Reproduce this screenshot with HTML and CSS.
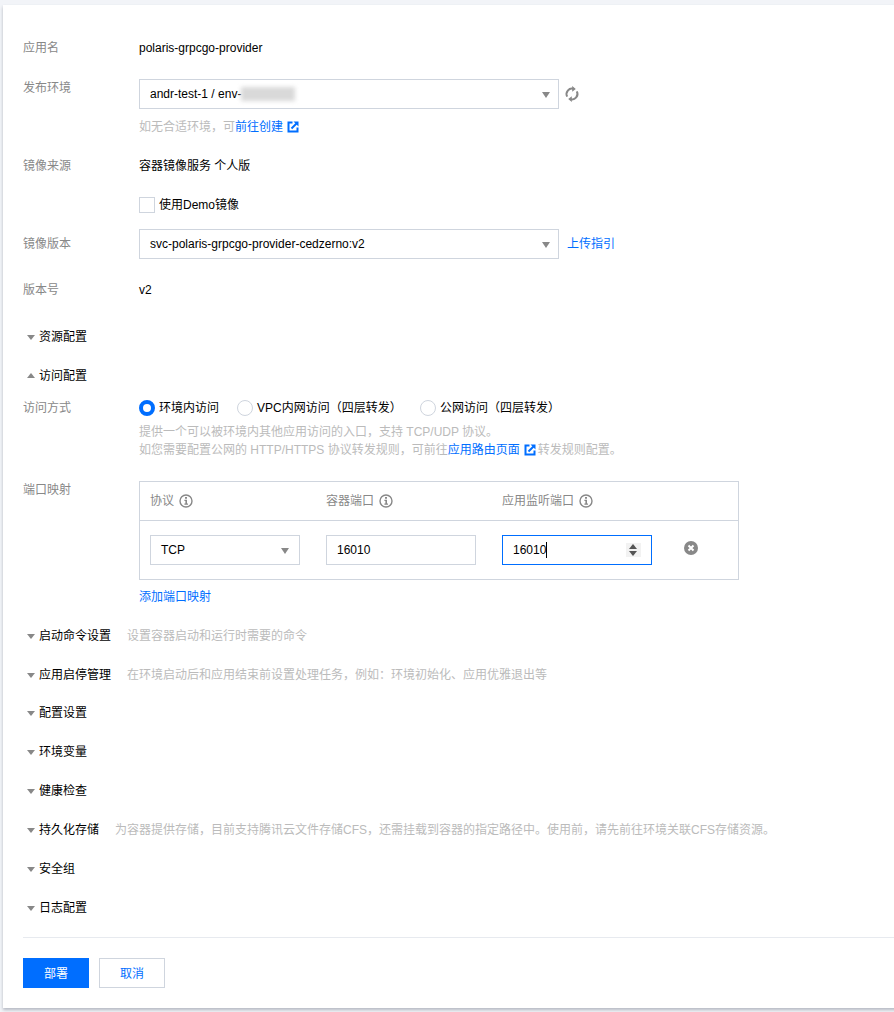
FILE: index.html
```html
<!DOCTYPE html>
<html lang="zh-CN">
<head>
<meta charset="utf-8">
<title>部署</title>
<link rel="stylesheet" href="styles.css">
</head>
<body>
<main class="card">
  <div class="row">
    <div class="label">应用名</div>
    <div class="value">polaris-grpcgo-provider</div>
  </div>

  <div class="row row-env">
    <div class="label">发布环境</div>
    <div class="field">
      <div class="inline">
        <div class="select select-wide"><span>andr-test-1 / env-</span><span class="blurred"></span><i class="caret-select"></i></div>
        <svg class="refresh" viewBox="0 0 16 16" width="16" height="16"><path d="M3.200 10.600A5.400 5.400 0 0 1 9.600 2.900" fill="none" stroke="#888" stroke-width="2"/><path d="M12.800 5.400A5.400 5.400 0 0 1 6.400 13.100" fill="none" stroke="#888" stroke-width="2"/><path d="M8.200 0l3.600 3-3.600 2.800zM7.800 16l-3.600-3 3.600-2.800z" fill="#888"/></svg>
      </div>
      <div class="help help-env">如无合适环境，可<a class="link">前往创建</a><svg class="ext" viewBox="0 0 12 12" width="12" height="12"><path d="M5.500 1.500h-4v9h9v-4" fill="none" stroke="#006eff" stroke-width="2"/><path d="M4.500 7.500l5-5" stroke="#006eff" stroke-width="2"/><path d="M6.500 .5h5v5z" fill="#006eff"/></svg>
      </div>
    </div>
  </div>

  <div class="row row-source">
    <div class="label">镜像来源</div>
    <div class="value">容器镜像服务 个人版</div>
  </div>

  <div class="row row-demo">
    <div class="label"></div>
    <label class="check"><span class="box"></span>使用Demo镜像</label>
  </div>

  <div class="row row-version">
    <div class="label label-mid">镜像版本</div>
    <div class="select select-wide"><span>svc-polaris-grpcgo-provider-cedzerno:v2</span><i class="caret-select"></i></div>
    <a class="link upload">上传指引</a>
  </div>

  <div class="row row-number">
    <div class="label">版本号</div>
    <div class="value">v2</div>
  </div>

  <div class="section section-first"><i class="caret"></i><span class="title">资源配置</span></div>
  <div class="section"><i class="caret caret-up"></i><span class="title">访问配置</span></div>

  <div class="row row-access">
    <div class="label">访问方式</div>
    <div class="field">
      <div class="radios">
        <span class="radio radio-a"><i class="dot dot-on"></i>环境内访问</span>
        <span class="radio radio-b"><i class="dot"></i>VPC内网访问（四层转发）</span>
        <span class="radio"><i class="dot"></i>公网访问（四层转发）</span>
      </div>
      <div class="help help-access">提供一个可以被环境内其他应用访问的入口，支持 TCP/UDP 协议。<br>如您需要配置公网的 HTTP/HTTPS 协议转发规则，可前往<a class="link">应用路由页面</a><svg class="ext ext-route" viewBox="0 0 12 12" width="12" height="12"><path d="M5.500 1.500h-4v9h9v-4" fill="none" stroke="#006eff" stroke-width="2"/><path d="M4.500 7.500l5-5" stroke="#006eff" stroke-width="2"/><path d="M6.500 .5h5v5z" fill="#006eff"/></svg>转发规则配置。</div>
    </div>
  </div>

  <div class="row row-ports">
    <div class="label">端口映射</div>
    <div class="field">
      <div class="table">
        <div class="thead">
          <div class="th">协议<svg class="info" viewBox="0 0 14 14" width="14" height="14"><circle cx="7" cy="7" r="6" fill="none" stroke="#888" stroke-width="1.400"/><path d="M6 3h2v1.700H6zM5.400 5.800h2.600v3.700h1v1.300H5.400V9.500h1V7.100h-1z" fill="#888"/></svg></div>
          <div class="th">容器端口<svg class="info" viewBox="0 0 14 14" width="14" height="14"><circle cx="7" cy="7" r="6" fill="none" stroke="#888" stroke-width="1.400"/><path d="M6 3h2v1.700H6zM5.400 5.800h2.600v3.700h1v1.300H5.400V9.500h1V7.100h-1z" fill="#888"/></svg></div>
          <div class="th">应用监听端口<svg class="info" viewBox="0 0 14 14" width="14" height="14"><circle cx="7" cy="7" r="6" fill="none" stroke="#888" stroke-width="1.400"/><path d="M6 3h2v1.700H6zM5.400 5.800h2.600v3.700h1v1.300H5.400V9.500h1V7.100h-1z" fill="#888"/></svg></div>
        </div>
        <div class="tbody">
          <div class="select select-cell"><span>TCP</span><i class="caret-select"></i></div>
          <div class="input">16010</div>
          <div class="input input-focus">16010<i class="cursor"></i><span class="stepper"><i class="step-up"></i><i class="step-down"></i></span></div>
          <svg class="remove" viewBox="0 0 14 14" width="14" height="14"><circle cx="7" cy="7" r="7" fill="#888"/><path d="M4.500 4.500l5 5M9.500 4.500l-5 5" stroke="#fff" stroke-width="2"/></svg>
        </div>
      </div>
      <a class="link add">添加端口映射</a>
    </div>
  </div>

  <div class="section"><i class="caret"></i><span class="title">启动命令设置</span><span class="desc">设置容器启动和运行时需要的命令</span></div>
  <div class="section"><i class="caret"></i><span class="title">应用启停管理</span><span class="desc">在环境启动后和应用结束前设置处理任务，例如：环境初始化、应用优雅退出等</span></div>
  <div class="section section-tight"><i class="caret"></i><span class="title">配置设置</span></div>
  <div class="section"><i class="caret"></i><span class="title">环境变量</span></div>
  <div class="section"><i class="caret"></i><span class="title">健康检查</span></div>
  <div class="section"><i class="caret"></i><span class="title">持久化存储</span><span class="desc">为容器提供存储，目前支持腾讯云文件存储CFS，还需挂载到容器的指定路径中。使用前，请先前往环境关联CFS存储资源。</span></div>
  <div class="section"><i class="caret"></i><span class="title">安全组</span></div>
  <div class="section"><i class="caret"></i><span class="title">日志配置</span></div>

  <div class="footer">
    <button class="btn btn-primary">部署</button>
    <button class="btn">取消</button>
  </div>
</main>
</body>
</html>
```

FILE: styles.css
```css
* { box-sizing: border-box; }
html, body { margin: 0; height: 100%; overflow: hidden; }
body {
  background: #f2f4f8;
  color: #000;
  font: 12px/18px "Liberation Sans", Arial, "Noto Sans CJK SC", sans-serif;
}
i { display: block; font-style: normal; }
.card {
  margin: 5px -20px 0 3px;
  height: 1003px;
  padding: 34px 0 0 20px;
  background: #fff;
  box-shadow: 0 2px 3px rgba(54, 58, 80, .32);
}
.row { display: flex; align-items: flex-start; }
.label { flex: 0 0 116px; color: #888; height: 18px; }
.label-mid { margin-top: 6px; }
.value { color: #000; }
.row-env { margin-top: 22px; }
.row-source { margin-top: 21px; }
.row-demo { margin-top: 21px; }
.row-version { margin-top: 15px; }
.row-number { margin-top: 22px; }
.row-access { margin-top: 14px; }
.row-ports { margin-top: 22px; }
.field { flex: 1; }
.inline { display: flex; align-items: center; }
.select {
  display: flex;
  align-items: center;
  height: 30px;
  padding-left: 10px;
  border: 1px solid #cfd5de;
  background: #fff;
  position: relative;
}
.select-wide { width: 420px; }
.select-cell { width: 150px; }
.caret-select {
  position: absolute;
  right: 8px;
  top: 12px;
  border-left: 4px solid transparent;
  border-right: 4px solid transparent;
  border-top: 6px solid #888;
}
.select-cell .caret-select { right: 10px; }
.blurred {
  width: 54px;
  height: 14px;
  background: #d9d9d9;
  filter: blur(2px);
}
.refresh { margin-left: 5px; }
.help { color: #bbb; }
.help-env { margin-top: 9px; display: flex; align-items: center; }
.link { color: #006eff; text-decoration: none; }
.ext { margin-left: 4px; vertical-align: -2px; }
.ext-route { margin-right: 2px; }
.check { display: flex; align-items: center; height: 18px; }
.box {
  width: 16px;
  height: 16px;
  margin: 0 4px 0 0;
  border: 1px solid #cfd5de;
  background: #fff;
}
.upload { margin: 6px 0 0 8px; }
.section { display: flex; align-items: center; height: 18px; margin-top: 21px; padding-left: 4px; }
.section-first { margin-top: 29px; }
.section-tight { margin-top: 20px; }
.caret {
  margin-right: 4px;
  border-left: 4px solid transparent;
  border-right: 4px solid transparent;
  border-top: 5px solid #888;
  margin-top: 1px;
}
.caret-up { border-top: 0; border-bottom: 5px solid #888; margin-top: -1px; }
.title { color: #000; }
.desc { color: #bbb; margin-left: 16px; white-space: nowrap; }
.radios { display: flex; align-items: center; height: 18px; }
.radio { display: flex; align-items: center; color: #000; white-space: nowrap; }
.radio-a { width: 98px; }
.radio-b { width: 183px; }
.dot {
  flex: none;
  width: 16px;
  height: 16px;
  margin-right: 4px;
  border: 1px solid #cfd5de;
  border-radius: 50%;
  background: #fff;
}
.dot-on { border: 4px solid #006eff; }
.help-access { margin-top: 6px; }
.table { width: 600px; height: 99px; border: 1px solid #cfd5de; }
.thead { display: flex; gap: 26px; height: 39px; padding-left: 10px; border-bottom: 1px solid #cfd5de; align-items: center; }
.th { display: flex; align-items: center; width: 150px; color: #888; }
.info { margin-left: 5px; }
.tbody { display: flex; align-items: flex-start; gap: 26px; padding: 14px 0 0 10px; }
.input {
  position: relative;
  display: flex;
  align-items: center;
  width: 150px;
  height: 30px;
  padding: 0 10px;
  border: 1px solid #cfd5de;
  color: #000;
}
.input-focus { border-color: #006eff; }
.cursor { width: 1px; height: 16px; background: #000; }
.stepper {
  position: absolute;
  right: 10px;
  top: 7px;
  width: 15px;
  height: 14px;
  background: #f2f2f2;
}
.step-up, .step-down {
  position: absolute;
  left: 3px;
  border-left: 4.500px solid transparent;
  border-right: 4.500px solid transparent;
}
.step-up { top: 1px; border-bottom: 5px solid #555; }
.step-down { top: 8px; border-top: 5px solid #555; }
.remove { margin: 6px 0 0 6px; }
.add { display: block; margin-top: 8px; }
.footer {
  display: flex;
  gap: 10px;
  margin-top: 20px;
  padding-top: 20px;
  border-top: 1px solid #e7eaef;
}
.btn {
  width: 66px;
  height: 30px;
  padding: 1px 0 0;
  border: 1px solid #cfd5de;
  background: #fff;
  color: #006eff;
  font: inherit;
}
.btn-primary { border-color: #006eff; background: #006eff; color: #fff; }
```
